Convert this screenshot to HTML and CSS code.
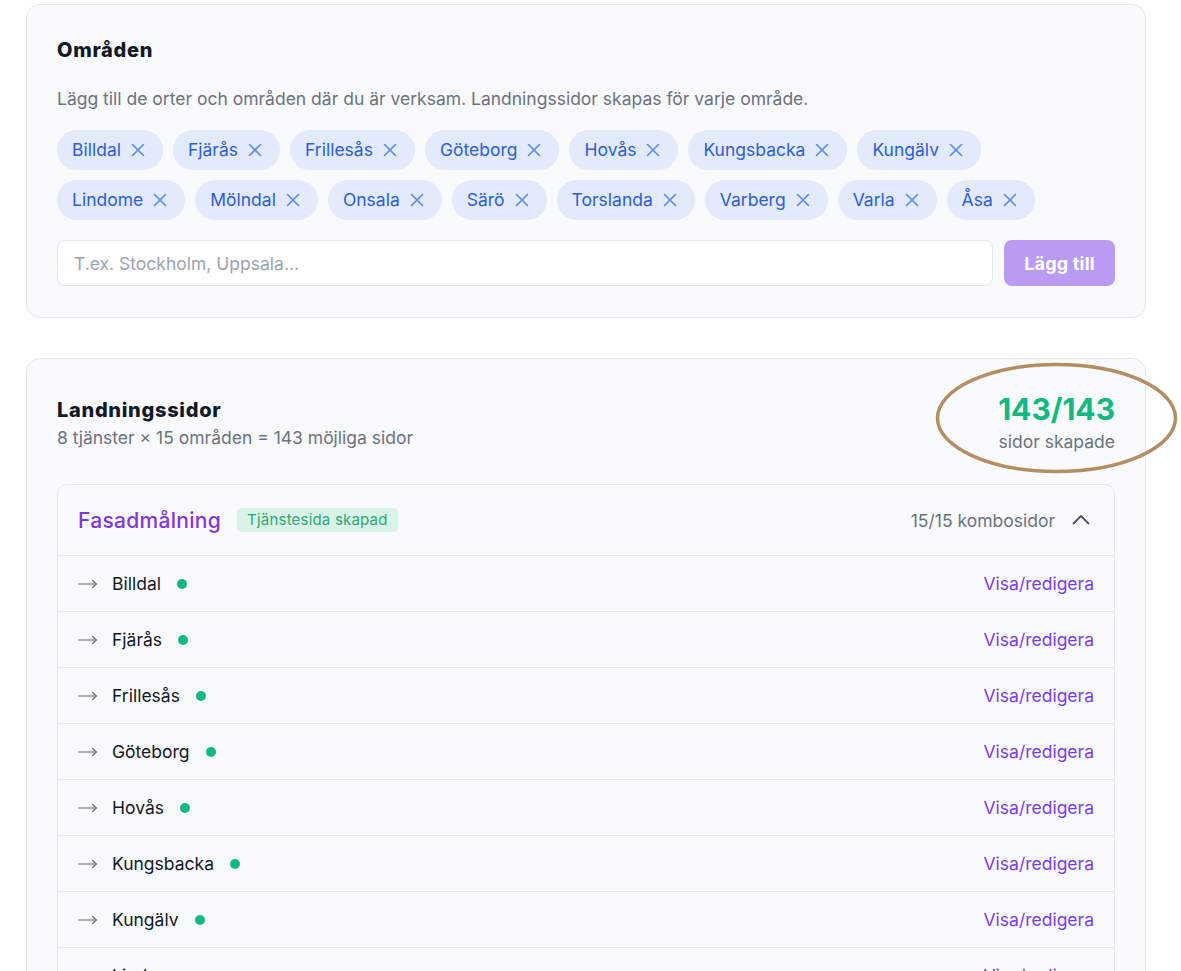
FILE: index.html
```html
<!DOCTYPE html>
<html lang="sv">
<head>
    <meta charset="UTF-8">
    <meta name="viewport" content="width=device-width, initial-scale=1.0">
    <title>Områden och landningssidor</title>
    <link rel="stylesheet" href="styles.css">
</head>
<body>
    <main class="page">
        <section class="card">
            <h2 class="card-title">Områden</h2>
            <p class="card-desc">Lägg till de orter och områden där du är verksam. Landningssidor skapas för varje område.</p>

            <div class="tags" id="tags"></div>

            <form class="add-row" onsubmit="return false">
                <input type="text" class="add-input" placeholder="T.ex. Stockholm, Uppsala...">
                <button type="submit" class="add-btn" disabled>Lägg till</button>
            </form>
        </section>

        <section class="card card-pages">
            <div class="pages-head">
                <div class="pages-info">
                    <h2 class="card-title">Landningssidor</h2>
                    <p class="pages-sub">8 tjänster × 15 områden = 143 möjliga sidor</p>
                </div>
                <div class="pages-count">
                    <strong>143/143</strong>
                    <span>sidor skapade</span>
                </div>
                <svg class="mark" width="243" height="112" viewBox="0 0 243 112">
                    <ellipse cx="121.5" cy="56" rx="119" ry="53.5" fill="none" stroke="#b48d64" stroke-width="3.5"/>
                </svg>
            </div>

            <div class="service">
                <div class="service-head">
                    <div class="service-name">
                        <span class="service-title">Fasadmålning</span>
                        <span class="badge">Tjänstesida skapad</span>
                    </div>
                    <div class="service-meta">
                        <span>15/15 kombosidor</span>
                        <svg width="20" height="20" viewBox="0 0 20 20"><polyline points="2.5,13.5 10,6 17.5,13.5" fill="none" stroke="#4b5563" stroke-width="1.8" stroke-linecap="round" stroke-linejoin="round"/></svg>
                    </div>
                </div>
                <ul class="combo-list" id="combos"></ul>
            </div>
        </section>
    </main>

    <script>
        const areas = ['Billdal', 'Fjärås', 'Frillesås', 'Göteborg', 'Hovås', 'Kungsbacka', 'Kungälv',
            'Lindome', 'Mölndal', 'Onsala', 'Särö', 'Torslanda', 'Varberg', 'Varla', 'Åsa'];

        const xIcon = '<svg width="16" height="16" viewBox="0 0 16 16"><path d="M2.5 2.5l11 11M13.5 2.5l-11 11" stroke="currentColor" stroke-width="1.6" stroke-linecap="round"/></svg>';
        const arrow = '<svg width="20" height="10" viewBox="0 0 20 10"><path d="M0.5 5h18M14.5 1.5l4 3.5-4 3.5" fill="none" stroke="currentColor" stroke-width="1.1" stroke-linecap="round" stroke-linejoin="round"/></svg>';

        // tags
        document.getElementById('tags').innerHTML = areas.map(a =>
            `<span class="tag">${a}<button type="button" class="tag-x" aria-label="Ta bort ${a}">${xIcon}</button></span>`
        ).join('');

        // combo pages for the service
        document.getElementById('combos').innerHTML = areas.map(a => `
            <li class="combo">
                <span class="combo-arrow">${arrow}</span>
                <span class="combo-name">${a}</span>
                <span class="dot"></span>
                <a href="#" class="combo-link">Visa/redigera</a>
            </li>`
        ).join('');
    </script>
</body>
</html>
```

FILE: styles.css
```css
:root {
    --card-bg: #f9fafb;
    --border: #e5e7eb;
    --text: #111827;
    --muted: #6b7280;
    --purple: #7c3aed;
    --green: #10b981;
    --tag-bg: #e2eafb;
    --tag-text: #2e5fd3;
}

* {
    box-sizing: border-box;
}

body {
    margin: 0;
    background: #ffffff;
    color: var(--text);
    font-family: Inter, "Noto Sans", Arial, sans-serif;
    font-size: 17.5px;
}

.page {
    width: 1120px;
    margin: 4px 0 0 26px;
}

.card {
    background: var(--card-bg);
    border: 1px solid var(--border);
    border-radius: 14px;
    padding: 30px 30px 31px;
    margin-bottom: 40px;
}

.card-title {
    margin: 0;
    font-size: 20px;
    line-height: 30px;
    font-weight: 800;
    letter-spacing: 0.7px;
}

.card-desc {
    margin: 21px 0 18px;
    line-height: 26px;
    color: var(--muted);
}

.tags {
    display: flex;
    flex-wrap: wrap;
    gap: 10px;
}

.tag {
    display: inline-flex;
    align-items: center;
    gap: 9px;
    height: 40px;
    padding: 0 17px 0 15px;
    border-radius: 20px;
    background: var(--tag-bg);
    color: var(--tag-text);
    line-height: 1;
}

.tag-x {
    display: flex;
    padding: 0;
    border: none;
    background: none;
    color: #5b8ae8;
    cursor: pointer;
}

.add-row {
    display: flex;
    gap: 11px;
    margin-top: 20px;
}

.add-input {
    flex: 1;
    height: 46px;
    padding: 0 16px;
    border: 1px solid var(--border);
    border-radius: 8px;
    background: #fff;
    font: inherit;
    color: var(--text);
}

.add-input::placeholder {
    color: #9ca3af;
}

.add-btn {
    width: 111px;
    height: 46px;
    border: none;
    border-radius: 8px;
    background: #bb9af3;
    color: #fff;
    font: 700 18px Inter, sans-serif;
    letter-spacing: 0.2px;
}

.pages-head {
    position: relative;
    display: flex;
    justify-content: space-between;
    align-items: flex-start;
    margin-bottom: 29px;
}

.pages-info {
    padding-top: 6px;
}

.pages-sub {
    margin: 0;
    line-height: 26px;
    color: var(--muted);
}

.pages-count {
    display: flex;
    flex-direction: column;
    align-items: flex-end;
}

.pages-count strong {
    font-size: 30px;
    line-height: 40px;
    font-weight: 700;
    color: var(--green);
}

.pages-count span {
    line-height: 26px;
    color: var(--muted);
}

/* hand-drawn highlight round the counter */
.mark {
    position: absolute;
    right: -63px;
    top: -27px;
    pointer-events: none;
}

.service {
    border: 1px solid var(--border);
    border-radius: 10px;
    overflow: hidden;
}

.service-head {
    display: flex;
    justify-content: space-between;
    align-items: center;
    height: 71px;
    padding: 0 23px 0 20px;
    border-bottom: 1px solid var(--border);
}

.service-name {
    display: flex;
    align-items: center;
    gap: 16px;
}

.service-title {
    font-size: 21px;
    font-weight: 500;
    letter-spacing: 0.3px;
    color: #8236db;
}

.badge {
    padding: 3px 10px;
    border-radius: 4px;
    background: #d9f3e7;
    color: #2fa977;
    font-size: 15px;
    line-height: 18px;
    letter-spacing: 0.2px;
}

.service-meta {
    display: flex;
    align-items: center;
    gap: 16px;
    color: var(--muted);
}

.combo-list {
    margin: 0;
    padding: 0;
    list-style: none;
}

.combo {
    display: flex;
    align-items: center;
    height: 56px;
    padding: 0 20px;
    border-bottom: 1px solid var(--border);
}

.combo-arrow {
    display: flex;
    width: 34px;
    color: #6b7280;
}

.combo-name {
    color: var(--text);
}

.dot {
    width: 10px;
    height: 10px;
    margin-left: 16px;
    border-radius: 50%;
    background: var(--green);
}

.combo-link {
    margin-left: auto;
    color: var(--purple);
    text-decoration: none;
}
```
